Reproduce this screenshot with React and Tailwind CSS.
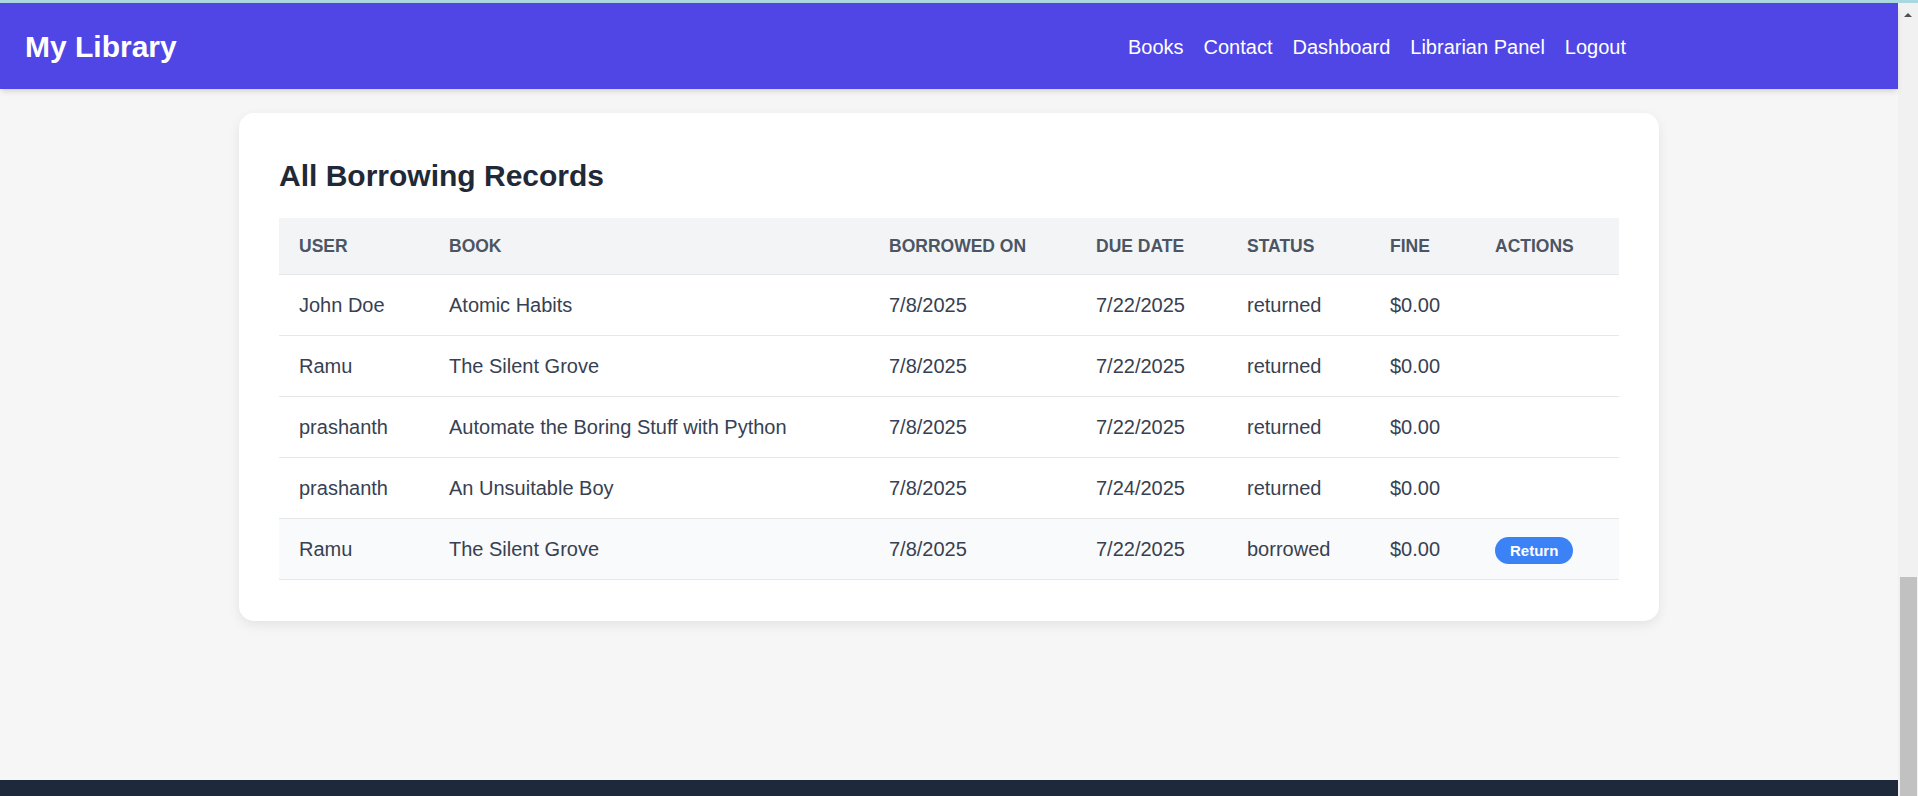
import React from "react";

const records = [
  { user: "John Doe", book: "Atomic Habits", borrowed: "7/8/2025", due: "7/22/2025", status: "returned", fine: "$0.00" },
  { user: "Ramu", book: "The Silent Grove", borrowed: "7/8/2025", due: "7/22/2025", status: "returned", fine: "$0.00" },
  { user: "prashanth", book: "Automate the Boring Stuff with Python", borrowed: "7/8/2025", due: "7/22/2025", status: "returned", fine: "$0.00" },
  { user: "prashanth", book: "An Unsuitable Boy", borrowed: "7/8/2025", due: "7/24/2025", status: "returned", fine: "$0.00" },
  { user: "Ramu", book: "The Silent Grove", borrowed: "7/8/2025", due: "7/22/2025", status: "borrowed", fine: "$0.00" },
];

const navLinks = ["Books", "Contact", "Dashboard", "Librarian Panel", "Logout"];

const Header = () => (
  <header className="h-[86px] shrink-0 bg-[#4f46e5] shadow-md flex items-center justify-between pl-[25px] pr-[272px] pt-[2px] relative z-10">
    <h1 className="text-[30px] font-bold text-white leading-[40px]">My Library</h1>
    <nav className="flex items-center gap-[20px] text-[20px] text-white leading-[28px]">
      {navLinks.map((link) => (
        <a key={link} href="#" className="hover:underline">
          {link}
        </a>
      ))}
    </nav>
  </header>
);

const RecordsTable = () => (
  <table className="w-full table-fixed border-collapse text-left">
    <colgroup>
      <col className="w-[150px]" />
      <col className="w-[440px]" />
      <col className="w-[207px]" />
      <col className="w-[151px]" />
      <col className="w-[143px]" />
      <col className="w-[105px]" />
      <col />
    </colgroup>
    <thead>
      <tr className="bg-[#f3f4f6] border-b border-[#e5e7eb]">
        {["User", "Book", "Borrowed On", "Due Date", "Status", "Fine", "Actions"].map((h) => (
          <th
            key={h}
            className="px-[20px] py-[15px] text-[17.5px] leading-[26px] font-bold uppercase text-[#4b5563]"
          >
            {h}
          </th>
        ))}
      </tr>
    </thead>
    <tbody>
      {records.map((r, i) => (
        <tr
          key={i}
          className={`border-b border-[#e5e7eb] ${r.status === "borrowed" ? "bg-[#f9fafb]" : "bg-white"}`}
        >
          <td className="px-[20px] py-[15px] text-[20px] leading-[30px] text-[#374151]">{r.user}</td>
          <td className="px-[20px] py-[15px] text-[20px] leading-[30px] text-[#374151]">{r.book}</td>
          <td className="px-[20px] py-[15px] text-[20px] leading-[30px] text-[#374151]">{r.borrowed}</td>
          <td className="px-[20px] py-[15px] text-[20px] leading-[30px] text-[#374151]">{r.due}</td>
          <td className="px-[20px] py-[15px] text-[20px] leading-[30px] text-[#374151]">{r.status}</td>
          <td className="px-[20px] py-[15px] text-[20px] leading-[30px] text-[#374151]">{r.fine}</td>
          <td className="px-[20px] py-[15px] text-[20px] leading-[30px] text-[#374151]">
            {r.status === "borrowed" && (
              <button className="h-[27px] px-[15px] rounded-full bg-[#3b82f6] text-white text-[15px] font-bold leading-[27px] align-middle">
                Return
              </button>
            )}
          </td>
        </tr>
      ))}
    </tbody>
  </table>
);

const Scrollbar = () => (
  <div className="w-[20px] shrink-0 bg-[#f1f1f1] flex flex-col">
    <div className="h-[24px] flex items-center justify-center">
      <div className="w-0 h-0 border-l-[4px] border-r-[4px] border-b-[4px] border-l-transparent border-r-transparent border-b-[#505050]" />
    </div>
    <div className="flex-1" />
    <div className="h-[219px] ml-[2px] mr-[1px] bg-[#c1c1c1]" />
  </div>
);

export default function App() {
  return (
    <div
      className="h-[796px] flex flex-col overflow-hidden bg-[#f6f6f6]"
      style={{ fontFamily: '"Liberation Sans", Arial, sans-serif' }}
    >
      <div className="h-[3px] shrink-0 bg-[#a9d8e0]" />
      <div className="flex-1 flex min-h-0">
        <div className="flex-1 flex flex-col min-w-0">
          <Header />
          <main className="flex-1 pt-[24px]">
            <div className="w-[1420px] mx-auto bg-white rounded-[15px] shadow-[0_4px_12px_rgba(0,0,0,0.08)] px-[40px] pt-[43px] pb-[41px]">
              <h2 className="text-[30px] leading-[40px] font-bold text-[#1f2937] mb-[22px]">
                All Borrowing Records
              </h2>
              <RecordsTable />
            </div>
          </main>
          <footer className="h-[16px] shrink-0 bg-[#1e293b]" />
        </div>
        <Scrollbar />
      </div>
    </div>
  );
}
